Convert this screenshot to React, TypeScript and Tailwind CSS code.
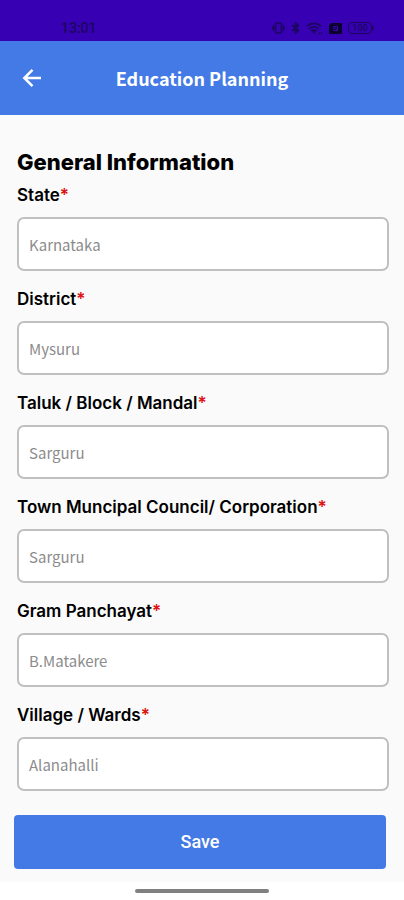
import { useState } from "react";

const fields = [
  { id: "state", label: "State", placeholder: "Karnataka" },
  { id: "district", label: "District", placeholder: "Mysuru" },
  { id: "taluk", label: "Taluk / Block / Mandal", placeholder: "Sarguru" },
  { id: "town", label: "Town Muncipal Council/ Corporation", placeholder: "Sarguru" },
  { id: "panchayat", label: "Gram Panchayat", placeholder: "B.Matakere" },
  { id: "village", label: "Village / Wards", placeholder: "Alanahalli" },
];

function StatusBar() {
  return (
    <div className="flex h-[41px] items-end justify-between bg-[#3700b3] pr-[30px] pb-1 pl-[61px] text-[#1c0660]">
      <span className="font-['Roboto',sans-serif] text-sm leading-[18px] font-medium">13:01</span>
      <div className="flex h-[18px] items-center gap-1.5">
        {/* vibrate */}
        <svg width="13" height="12" viewBox="0 0 13 12" fill="none" stroke="currentColor" strokeWidth="1.5">
          <rect x="3.7" y="1" width="5.6" height="10" rx="1.5" />
          <path d="M1.8 3v6M11.2 3v6M.6 4.7v2.6M12.4 4.7v2.6" />
        </svg>
        {/* bluetooth */}
        <svg width="9" height="12" viewBox="0 0 9 12" fill="none" stroke="currentColor" strokeWidth="1.8">
          <path d="M1.2 3.2l6 5.4L4.4 11V1l2.8 2.4-6 5.4" />
        </svg>
        {/* wifi */}
        <svg width="17" height="13" viewBox="0 0 17 13" fill="none" stroke="currentColor" strokeWidth="1.7">
          <path d="M.8 4.2c4-3.8 10.200-3.800 14.200 0M3.100 6.800c2.700-2.500 6.900-2.500 9.600 0M5.300 9.200c1.500-1.400 3.700-1.400 5.200 0" />
          <path d="M6.500 9.800h2.900L7.900 11.500zM13.500 10v2.500M15.500 10v2.500" fill="currentColor" strokeWidth="0.9" />
        </svg>
        {/* sim */}
        <svg className="text-[#0b0230]" width="13" height="11" viewBox="0 0 13 11">
          <path d="M2.500 0H12a1 1 0 0 1 1 1v9a1 1 0 0 1-1 1H1a1 1 0 0 1-1-1V2.500z" fill="currentColor" />
          <path d="M4.800 3.500h3.700v4H4.800zM5 3.700l3.300 3.600" stroke="#3700b3" strokeWidth="1" fill="none" />
        </svg>
        {/* battery */}
        <div className="flex items-center">
          <div className="flex h-3 w-6 items-center justify-center rounded border border-current font-['Roboto',sans-serif] text-[9px] leading-none font-medium">
            100
          </div>
          <div className="h-1 w-0.5 rounded-r bg-current" />
        </div>
      </div>
    </div>
  );
}

export default function App() {
  const [values, setValues] = useState<Record<string, string>>({});

  return (
    <div className="flex min-h-screen flex-col bg-[#fafafa] font-['Inter',sans-serif] text-black">
      <StatusBar />
      <header className="grid h-[74px] grid-cols-[1fr_auto_1fr] items-center bg-[#437ae6] px-5 text-white">
        <button type="button" aria-label="Back" className="w-6">
          <svg width="24" height="24" viewBox="0 0 24 24" fill="none" stroke="currentColor" strokeWidth="2.5">
            <path d="M21 12H5M12.500 3.800L4.300 12l8.200 8.200" />
          </svg>
        </button>
        <h1 className="font-['Noto_Sans_CJK_JP',sans-serif] text-lg leading-6 font-bold">
          Education Planning
        </h1>
      </header>

      <form onSubmit={(e) => e.preventDefault()}>
        <div className="pt-[34px] pr-[15px] pl-[17px]">
          <h2 className="mb-2.5 text-[22px] leading-[26px] font-extrabold">General Information</h2>
          <div className="flex flex-col gap-[18px]">
            {fields.map((field) => (
              <div key={field.id} className="flex flex-col gap-3">
                <label htmlFor={field.id} className="text-[17px] leading-5 font-semibold">
                  {field.label}
                  <span className="text-[#e01010]">*</span>
                </label>
                <input
                  id={field.id}
                  type="text"
                  required
                  placeholder={field.placeholder}
                  value={values[field.id] ?? ""}
                  onChange={(e) => setValues({ ...values, [field.id]: e.target.value })}
                  className="h-[54px] w-full rounded-[7px] border-2 border-[#c0c0c0] bg-white px-[10px] font-['Noto_Sans_CJK_JP',sans-serif] text-[15px] placeholder:text-[#8c8c8c]"
                />
              </div>
            ))}
          </div>
        </div>
        <div className="pt-6 pr-[18px] pl-[14px]">
          <button
            type="submit"
            className="h-[54px] w-full rounded bg-[#437ae6] font-['Roboto',sans-serif] text-lg font-medium text-white"
          >
            Save
          </button>
        </div>
      </form>

      <div className="mt-auto flex h-[18px] justify-center bg-white pt-[7px]">
        <div className="h-1 w-1/3 rounded-full bg-[#808080]" />
      </div>
    </div>
  );
}
